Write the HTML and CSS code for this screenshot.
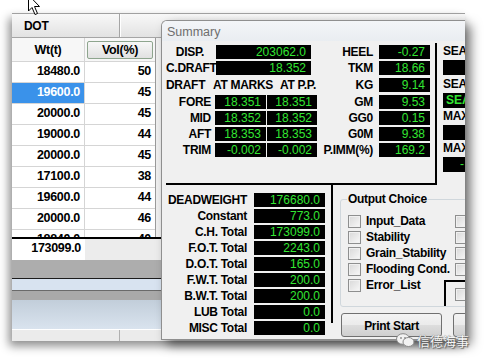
FILE: index.html
```html
<!DOCTYPE html>
<html>

<head>
    <title>Summary</title>
    <link rel="stylesheet" href="styles.css">
</head>

<body>
    <svg class="cursor" width="14" height="16" viewBox="0 0 14 16">
        <polygon points="1.5,-5 1.5,11 5,7.5 8,14.5 10.5,13.5 7.5,6.5 12.5,6.5" fill="#fff" stroke="#000" stroke-width="1" />
    </svg>

    <div class="back-window">
        <div class="grid-head">
            <div class="head-cell head-dot">DOT</div>
            <div class="head-cell"></div>
        </div>
        <div class="grid-area">
            <div class="grid">
                <div class="grid-row grid-title">
                    <div class="cell col-wt">Wt(t)</div>
                    <div class="cell col-vol"><span class="sort-btn">Vol(%)</span></div>
                </div>
                <div class="grid-row"><div class="cell col-wt">18480.0</div><div class="cell col-vol">50</div></div>
                <div class="grid-row"><div class="cell col-wt selected">19600.0</div><div class="cell col-vol">45</div></div>
                <div class="grid-row"><div class="cell col-wt">20000.0</div><div class="cell col-vol">45</div></div>
                <div class="grid-row"><div class="cell col-wt">19000.0</div><div class="cell col-vol">44</div></div>
                <div class="grid-row"><div class="cell col-wt">20000.0</div><div class="cell col-vol">45</div></div>
                <div class="grid-row"><div class="cell col-wt">17100.0</div><div class="cell col-vol">38</div></div>
                <div class="grid-row"><div class="cell col-wt">19600.0</div><div class="cell col-vol">44</div></div>
                <div class="grid-row"><div class="cell col-wt">20000.0</div><div class="cell col-vol">46</div></div>
                <div class="grid-row"><div class="cell col-wt">18840.0</div><div class="cell col-vol">40</div></div>
            </div>
            <div class="grid-rest"></div>
        </div>
        <div class="grid-total">
            <div class="total-cell">173099.0</div>
        </div>
        <div class="band band-gray"></div>
        <div class="band band-dark"></div>
        <div class="band band-light"></div>
        <div class="band band-line"></div>
        <div class="band band-mid"></div>
        <div class="band band-blue"></div>
        <div class="status-bar">
            <div class="status-pane"></div>
        </div>
    </div>

    <div class="front-window">
        <div class="title-bar">Summary</div>

        <div class="upper">
            <div class="upper-main">
                <div class="draft-block">
                    <div class="row"><span class="lbl lbl-c">DISP.</span><span class="val val-wide">203062.0</span></div>
                    <div class="row row-17"><span class="lbl lbl-c">C.DRAFT</span><span class="val val-wide">18.352</span></div>
                    <div class="row row-17 draft-head">
                        <span class="dh-1">DRAFT</span><span class="dh-2">AT MARKS</span><span class="dh-3">AT P.P.</span>
                    </div>
                    <div class="row"><span class="lbl lbl-draft">FORE</span><span class="val val-a">18.351</span><span class="val val-b">18.351</span></div>
                    <div class="row"><span class="lbl lbl-draft">MID</span><span class="val val-a">18.352</span><span class="val val-b">18.352</span></div>
                    <div class="row"><span class="lbl lbl-draft">AFT</span><span class="val val-a">18.353</span><span class="val val-b">18.353</span></div>
                    <div class="row"><span class="lbl lbl-draft">TRIM</span><span class="val val-a">-0.002</span><span class="val val-b">-0.002</span></div>
                </div>
                <div class="stab-block">
                    <div class="row"><span class="lbl lbl-stab">HEEL</span><span class="val val-stab">-0.27</span></div>
                    <div class="row row-17"><span class="lbl lbl-stab">TKM</span><span class="val val-stab">18.66</span></div>
                    <div class="row row-17"><span class="lbl lbl-stab">KG</span><span class="val val-stab">9.14</span></div>
                    <div class="row"><span class="lbl lbl-stab">GM</span><span class="val val-stab">9.53</span></div>
                    <div class="row"><span class="lbl lbl-stab">GG0</span><span class="val val-stab">0.15</span></div>
                    <div class="row"><span class="lbl lbl-stab">G0M</span><span class="val val-stab">9.38</span></div>
                    <div class="row"><span class="lbl lbl-stab">P.IMM(%)</span><span class="val val-stab">169.2</span></div>
                </div>
            </div>
            <div class="upper-side">
                <div class="row"><span class="lbl">SEA</span></div>
                <div class="row row-17"><span class="val val-side"></span></div>
                <div class="row"><span class="lbl">SEA</span></div>
                <div class="row"><span class="val val-side val-left">SEA</span></div>
                <div class="row"><span class="lbl">MAX</span></div>
                <div class="row"><span class="val val-side"></span></div>
                <div class="row"><span class="lbl">MAX</span></div>
                <div class="row"><span class="val val-side val-dash">-</span></div>
            </div>
        </div>

        <div class="lower">
            <div class="dw-block">
                <div class="row"><span class="lbl lbl-dw">DEADWEIGHT</span><span class="val val-dw">176680.0</span></div>
                <div class="row"><span class="lbl lbl-dw">Constant</span><span class="val val-dw">773.0</span></div>
                <div class="row"><span class="lbl lbl-dw">C.H. Total</span><span class="val val-dw">173099.0</span></div>
                <div class="row"><span class="lbl lbl-dw">F.O.T. Total</span><span class="val val-dw">2243.0</span></div>
                <div class="row"><span class="lbl lbl-dw">D.O.T. Total</span><span class="val val-dw">165.0</span></div>
                <div class="row"><span class="lbl lbl-dw">F.W.T. Total</span><span class="val val-dw">200.0</span></div>
                <div class="row"><span class="lbl lbl-dw">B.W.T. Total</span><span class="val val-dw">200.0</span></div>
                <div class="row"><span class="lbl lbl-dw">LUB Total</span><span class="val val-dw">0.0</span></div>
                <div class="row"><span class="lbl lbl-dw">MISC Total</span><span class="val val-dw">0.0</span></div>
            </div>
            <div class="output-side">
                <fieldset class="output-group">
                    <legend>Output Choice</legend>
                    <div class="check-cols">
                        <div class="check-col1">
                            <div class="check-row"><span class="box"></span><span class="check-label">Input_Data</span></div>
                            <div class="check-row"><span class="box"></span><span class="check-label">Stability</span></div>
                            <div class="check-row"><span class="box"></span><span class="check-label">Grain_Stability</span></div>
                            <div class="check-row"><span class="box"></span><span class="check-label">Flooding Cond.</span></div>
                            <div class="check-row"><span class="box"></span><span class="check-label">Error_List</span></div>
                        </div>
                        <div class="check-col2">
                            <div class="check-row"><span class="box"></span></div>
                            <div class="check-row"><span class="box"></span></div>
                            <div class="check-row"><span class="box"></span></div>
                            <div class="check-row"><span class="box"></span></div>
                            <div class="inner-panel"><span class="box"></span></div>
                        </div>
                    </div>
                </fieldset>
                <div class="buttons">
                    <button class="btn">Print Start</button>
                    <button class="btn"></button>
                </div>
            </div>
        </div>
    </div>

    <div class="watermark">
        <svg width="19" height="15" viewBox="0 0 19 15">
            <ellipse cx="7" cy="6" rx="6.5" ry="5.3" fill="#f2f2f2" stroke="#8a8a8a" stroke-width="1" />
            <ellipse cx="12.5" cy="9" rx="5.5" ry="4.5" fill="#f2f2f2" stroke="#8a8a8a" stroke-width="1" />
            <circle cx="5" cy="5" r="0.9" fill="#8a8a8a" />
            <circle cx="9" cy="5" r="0.9" fill="#8a8a8a" />
        </svg>
        <span class="wm-text">信德海事</span>
    </div>
</body>

</html>
```

FILE: styles.css
```css
* {
    box-sizing: border-box;
}

body {
    margin: 0;
    width: 485px;
    height: 361px;
    overflow: hidden;
    position: relative;
    background: #fff;
    font-family: "Liberation Sans", Arial, sans-serif;
    font-size: 12px;
    font-weight: bold;
    letter-spacing: -0.3px;
    color: #000;
}

.cursor {
    position: absolute;
    left: 27px;
    top: 0;
    z-index: 5;
}

/* window behind: the tank grid */
.back-window {
    position: absolute;
    left: 12px;
    top: 13px;
    width: 453px;
    height: 328px;
    background: #f0f0f0;
    border-top: 1px solid #a0a0a0;
    box-shadow: -3px 5px 9px rgba(0, 0, 0, 0.45);
    overflow: hidden;
}

.grid-head {
    display: flex;
    height: 24px;
    background: linear-gradient(#f8f8f8, #e2e2e2);
    border-bottom: 1px solid #a5a5a5;
}

.head-cell {
    padding: 5px 0 0 12px;
}

.head-dot {
    width: 108px;
    border-right: 1px solid #a5a5a5;
    box-shadow: 1px 0 0 #fff;
}

.grid-area {
    display: flex;
    height: 199px;
}

.grid {
    width: 144px;
    height: 199px;
    overflow: hidden;
    background: #fff;
    border-right: 1px solid #9a9a9a;
}

.grid-row {
    display: flex;
    height: 21px;
}

.grid-title {
    height: 24px;
    background: #f7f7f7;
}

.cell {
    height: 100%;
    border-bottom: 1px solid #d5d5d5;
    text-align: right;
    padding: 2px 4px 0 0;
    font-size: 12.5px;
}

.col-wt {
    width: 73px;
    border-right: 1px solid #d5d5d5;
}

.col-vol {
    width: 70px;
}

.grid-title .cell {
    text-align: center;
    padding: 5px 0 0;
}

.grid-title .col-vol {
    padding: 3px 2px 0;
}

.sort-btn {
    display: block;
    height: 18px;
    line-height: 16px;
    border: 1px solid #8ea58e;
    border-radius: 2px;
    background: linear-gradient(#f7f7f7, #e1e1e1);
}

.selected {
    background: #3a92ea;
    color: #fff;
}

.grid-rest {
    flex: 1;
}

.grid-total {
    display: flex;
    height: 23px;
    border-top: 2px solid #000;
    background: #ececec;
}

.total-cell {
    width: 73px;
    background: #fff;
    text-align: right;
    padding: 2px 4px 0 0;
    font-size: 12.5px;
}

.band-gray {
    height: 18px;
    background: #adadad;
}

.band-dark {
    height: 1px;
    background: #1c1c1c;
}

.band-light {
    height: 11px;
    background: #d8e3f0;
}

.band-line {
    height: 1px;
    background: #6a6a6a;
}

.band-mid {
    height: 9px;
    background: #a9a9a9;
}

.band-blue {
    height: 29px;
    background: linear-gradient(#c2ceda, #d9e3ee);
}

.status-bar {
    height: 12px;
    border-top: 1px solid #fff;
    background: #ebebeb;
}

.status-pane {
    width: 108px;
    height: 100%;
    border-right: 1px solid #b0b0b0;
}

/* Summary window */
.front-window {
    position: absolute;
    left: 161px;
    top: 20px;
    width: 304px;
    height: 320px;
    background: #f0f0f0;
    border: 1px solid #8f8f8f;
    border-right: 0;
    border-radius: 6px 0 0 0;
    box-shadow: 6px 5px 11px rgba(0, 0, 0, 0.5);
    overflow: hidden;
}

.title-bar {
    height: 20px;
    padding: 4px 0 0 5px;
    font-weight: normal;
    font-size: 12.5px;
    letter-spacing: 0;
    color: #6e6e6e;
    background: linear-gradient(#f3f5f8, #e9edf1);
}

.row {
    display: flex;
    height: 16px;
    white-space: nowrap;
}

.row-17 {
    height: 17px;
}

.lbl {
    line-height: 14px;
}

.val {
    display: block;
    height: 14px;
    line-height: 14px;
    background: #000;
    color: #33e633;
    font-weight: normal;
    letter-spacing: 0;
    text-align: right;
    padding-right: 5px;
    overflow: hidden;
}

.upper {
    display: flex;
    margin-top: 2px;
    padding-left: 4px;
}

.upper-main {
    display: flex;
    flex: none;
    width: 271px;
    height: 142px;
    padding-top: 2px;
    border-right: 2px solid #000;
    border-bottom: 2px solid #000;
}

.draft-block {
    width: 151px;
}

.lbl-c {
    width: 48px;
    text-align: center;
}

.val-wide {
    width: 95px;
    margin-left: 2px;
}

.draft-head span {
    line-height: 14px;
}

.dh-1 {
    width: 47px;
}

.dh-2 {
    width: 67px;
}

.lbl-draft {
    width: 45px;
    text-align: right;
}

.val-a {
    width: 51px;
    margin-left: 4px;
}

.val-b {
    width: 50px;
    margin-left: 1px;
}

.stab-block {
    width: 113px;
}

.lbl-stab {
    width: 56px;
    text-align: right;
}

.val-stab {
    width: 51px;
    margin-left: 6px;
}

.upper-side {
    flex: none;
    width: 60px;
    padding: 1px 0 0 6px;
}

.val-side {
    width: 50px;
    height: 15px;
}

.val-left {
    text-align: left;
    padding: 0 0 0 3px;
    font-weight: bold;
}

.val-dash {
    text-align: left;
    padding-left: 17px;
}

.lower {
    display: flex;
    padding-left: 4px;
}

.dw-block {
    flex: none;
    width: 167px;
    height: 138px;
    padding-top: 8px;
    border-right: 2px solid #000;
}

.lbl-dw {
    width: 81px;
    text-align: right;
}

.val-dw {
    width: 71px;
    margin-left: 7px;
}

.output-side {
    flex: none;
    width: 200px;
    padding-left: 7px;
}

.output-group {
    margin: 7px 0 0;
    padding: 7px 0 0 7px;
    width: 160px;
    height: 115px;
    border: 1px solid #d0d7dc;
    border-radius: 3px;
}

.output-group legend {
    margin-left: -1px;
    padding: 0 1px;
    line-height: 14px;
}

.check-cols {
    display: flex;
}

.check-col1 {
    width: 107px;
}

.check-row {
    display: flex;
    height: 16px;
    white-space: nowrap;
}

.box {
    display: block;
    width: 13px;
    height: 13px;
    margin-top: 2px;
    border: 1px solid #8e8f8f;
    background: linear-gradient(135deg, #d8d8d8, #f8f8f8);
    box-shadow: inset 0 0 0 1px #f0f0f0;
}

.check-label {
    margin-left: 5px;
    line-height: 16px;
}

.inner-panel {
    width: 40px;
    height: 26px;
    margin: 3px 0 0 -11px;
    padding: 6px 0 0 9px;
    border-top: 2px solid #000;
    border-left: 2px solid #000;
}

.inner-panel .box {
    margin-top: 0;
}

.buttons {
    display: flex;
    gap: 11px;
    margin: 6px 0 0 1px;
}

.btn {
    flex: none;
    width: 101px;
    height: 24px;
    padding: 2px 0 0;
    line-height: 20px;
    border: 1px solid #707070;
    border-radius: 3px;
    background: linear-gradient(#f3f3f3, #ebebeb 48%, #dddddd 52%, #cfcfcf);
    font-family: inherit;
    font-size: 12px;
    font-weight: bold;
    letter-spacing: -0.3px;
    color: #000;
}

.watermark {
    position: absolute;
    left: 396px;
    top: 331px;
    display: flex;
    align-items: center;
    gap: 2px;
}

.wm-text {
    font-family: "Noto Sans CJK SC", sans-serif;
    font-size: 13px;
    font-weight: normal;
    letter-spacing: 0;
    color: #f6f6f6;
    text-shadow: 0 0 1px #555, 1px 1px 1px #666;
}
```
